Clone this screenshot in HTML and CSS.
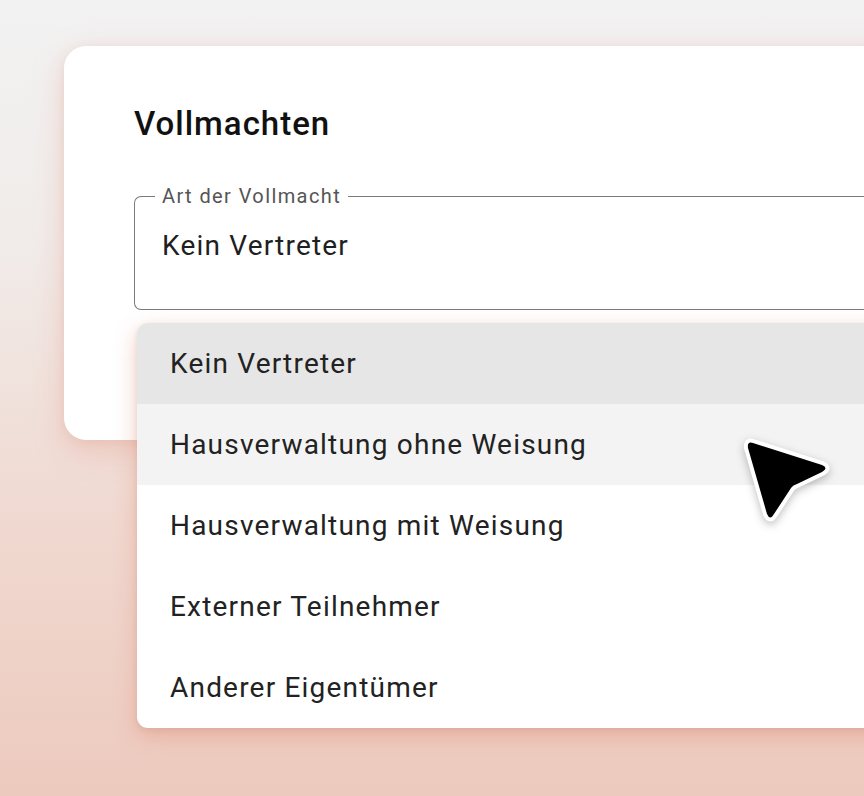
FILE: index.html
```html
<!DOCTYPE html>
<html lang="de">
<head>
<meta charset="utf-8">
<link rel="stylesheet" href="styles.css">
</head>
<body>
<div class="stage">
  <div class="card">
    <h1 class="title">Vollmachten</h1>
    <div class="field">
      <span class="label">Art der Vollmacht</span>
      <div class="value">Kein Vertreter</div>
      <ul class="menu">
        <li class="item selected">Kein Vertreter</li>
        <li class="item hover">Hausverwaltung ohne Weisung</li>
        <li class="item">Hausverwaltung mit Weisung</li>
        <li class="item">Externer Teilnehmer</li>
        <li class="item">Anderer Eigentümer</li>
      </ul>
    </div>
  </div>
  <svg class="cursor" width="110" height="110" viewBox="0 0 110 110">
    <path d="M 31 25 Q 25 23 26 30 L 45 96 Q 48 103 52 96 L 69 70 Q 71 67 75 66 L 100 54 Q 107 50 100 47 Z" fill="#000" stroke="#fff" stroke-width="8" stroke-linejoin="round" paint-order="stroke"/>
  </svg>
</div>
</body>
</html>
```

FILE: styles.css
```css
html, body {
  margin: 0;
  padding: 0;
  width: 864px;
  height: 796px;
  overflow: hidden;
}
body {
  background: linear-gradient(180deg, #f2f2f2 0%, #f1ecea 30%, #f0d9d1 65%, #edcabe 100%);
  font-family: Roboto, "Noto Sans", sans-serif;
  color: #1f1f1f;
}
.stage {
  position: relative;
  padding: 46px 0 0 64px;
  height: 750px;
}
.card {
  width: 840px;
  height: 394px;
  box-sizing: border-box;
  background: #fff;
  border-radius: 22px;
  padding: 58px 0 0 70px;
  box-shadow: 0 10px 30px rgba(230, 150, 130, 0.35), 0 2px 8px rgba(200, 140, 120, 0.15);
}
.title {
  margin: 0;
  font-size: 33px;
  line-height: 40px;
  font-weight: 500;
  color: #111;
  letter-spacing: 1px;
}
.field {
  position: relative;
  margin-top: 52px;
  height: 114px;
  border: 1.5px solid #7a7a7a;
  border-right: none;
  border-radius: 7px 0 0 7px;
  box-sizing: border-box;
  padding: 29px 0 0 27px;
}
.label {
  position: absolute;
  top: -13px;
  left: 20px;
  padding: 0 7px;
  background: #fff;
  font-size: 20px;
  line-height: 24px;
  color: #555;
  letter-spacing: 1.4px;
}
.value {
  font-size: 28px;
  line-height: 40px;
  color: #1f1f1f;
  letter-spacing: 1.2px;
}
.menu {
  position: absolute;
  top: 126px;
  left: 2px;
  width: 760px;
  margin: 0;
  padding: 0;
  list-style: none;
  background: #fff;
  border-radius: 11px;
  overflow: hidden;
  box-shadow: 0 8px 22px rgba(225, 140, 115, 0.45), 0 2px 6px rgba(0, 0, 0, 0.08);
}
.item {
  height: 81px;
  display: flex;
  align-items: center;
  padding-left: 33px;
  font-size: 28px;
  color: #222;
  letter-spacing: 1.2px;
}
.item.selected { background: #e6e6e6; }
.item.hover { background: #f3f3f3; }
.cursor {
  position: absolute;
  left: 722px;
  top: 418px;
  filter: drop-shadow(0 3px 4px rgba(0,0,0,0.25));
}
```
